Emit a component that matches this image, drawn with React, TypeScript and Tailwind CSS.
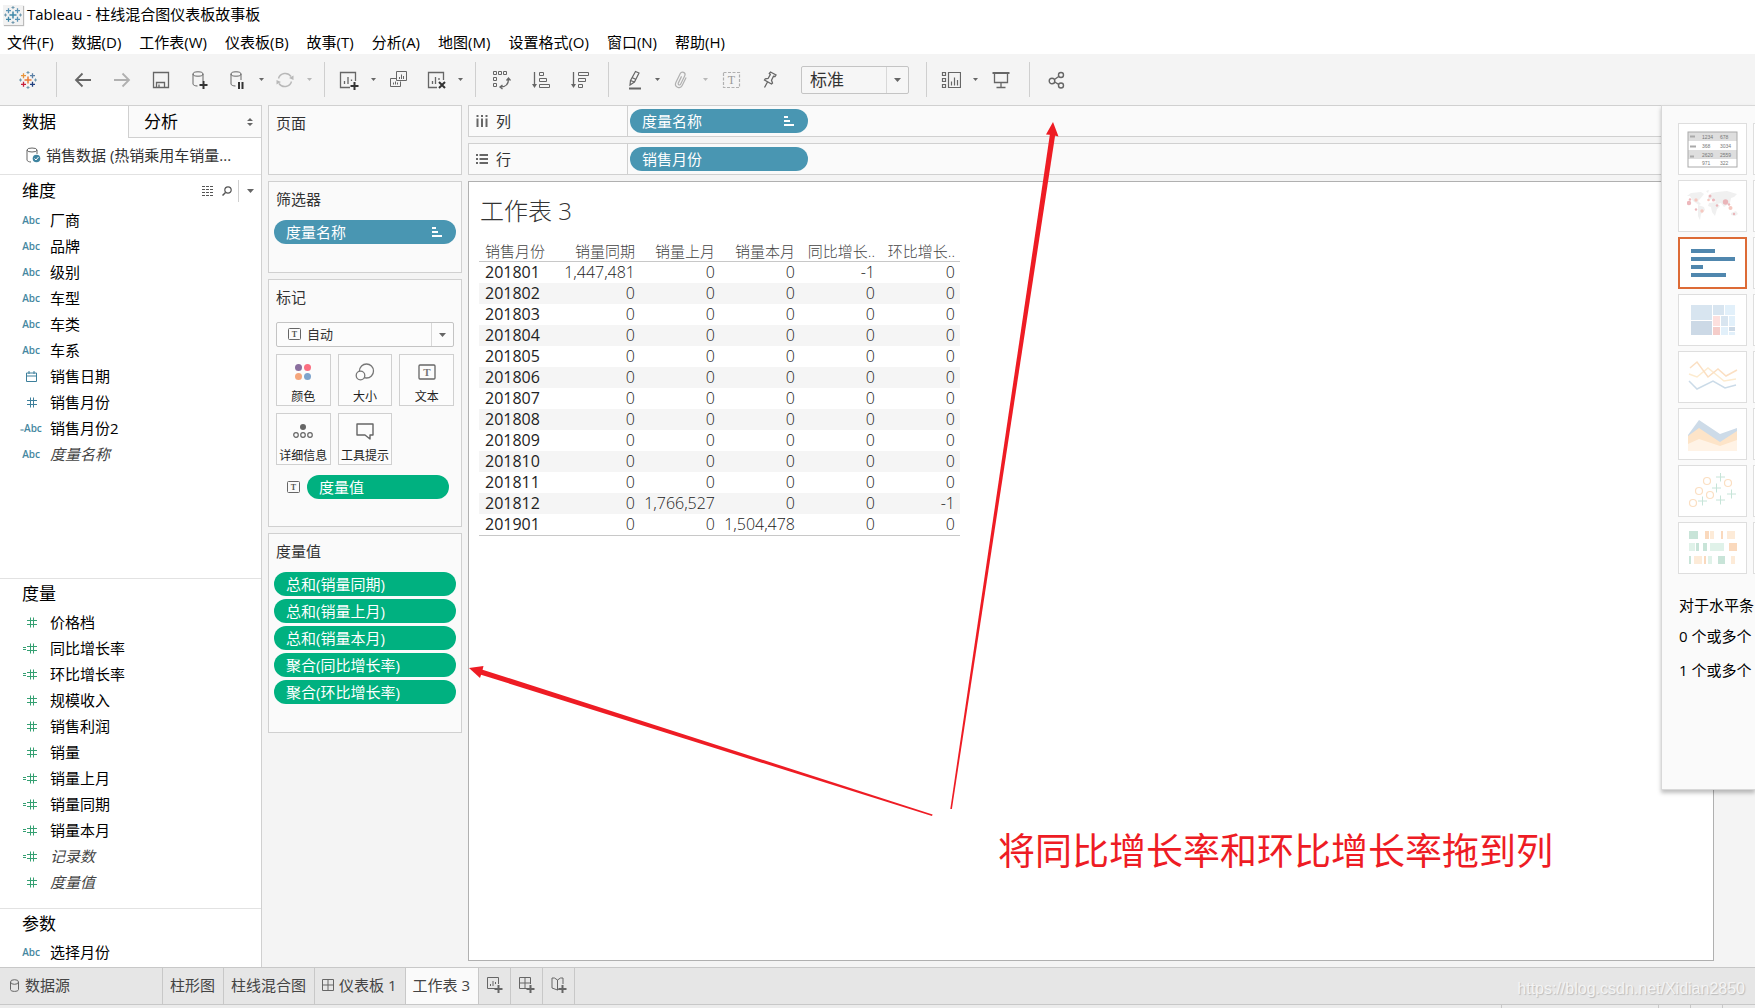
import type { ReactNode } from 'react';

const menus = ['文件(F)', '数据(D)', '工作表(W)', '仪表板(B)', '故事(T)', '分析(A)', '地图(M)', '设置格式(O)', '窗口(N)', '帮助(H)'];

type Field = { name: string; icon: 'abc' | 'num' | 'date'; calc?: boolean; italic?: boolean };

const dimensions: Field[] = [
  { name: '厂商', icon: 'abc' },
  { name: '品牌', icon: 'abc' },
  { name: '级别', icon: 'abc' },
  { name: '车型', icon: 'abc' },
  { name: '车类', icon: 'abc' },
  { name: '车系', icon: 'abc' },
  { name: '销售日期', icon: 'date' },
  { name: '销售月份', icon: 'num' },
  { name: '销售月份2', icon: 'abc', calc: true },
  { name: '度量名称', icon: 'abc', italic: true },
];

const measures: Field[] = [
  { name: '价格档', icon: 'num' },
  { name: '同比增长率', icon: 'num', calc: true },
  { name: '环比增长率', icon: 'num', calc: true },
  { name: '规模收入', icon: 'num' },
  { name: '销售利润', icon: 'num' },
  { name: '销量', icon: 'num' },
  { name: '销量上月', icon: 'num', calc: true },
  { name: '销量同期', icon: 'num', calc: true },
  { name: '销量本月', icon: 'num', calc: true },
  { name: '记录数', icon: 'num', calc: true, italic: true },
  { name: '度量值', icon: 'num', italic: true },
];

const measureValues = ['总和(销量同期)', '总和(销量上月)', '总和(销量本月)', '聚合(同比增长率)', '聚合(环比增长率)'];

const columns = ['销量同期', '销量上月', '销量本月', '同比增长..', '环比增长..'];

const rows = [
  ['201801', '1,447,481', '0', '0', '-1', '0'],
  ['201802', '0', '0', '0', '0', '0'],
  ['201803', '0', '0', '0', '0', '0'],
  ['201804', '0', '0', '0', '0', '0'],
  ['201805', '0', '0', '0', '0', '0'],
  ['201806', '0', '0', '0', '0', '0'],
  ['201807', '0', '0', '0', '0', '0'],
  ['201808', '0', '0', '0', '0', '0'],
  ['201809', '0', '0', '0', '0', '0'],
  ['201810', '0', '0', '0', '0', '0'],
  ['201811', '0', '0', '0', '0', '0'],
  ['201812', '0', '1,766,527', '0', '0', '-1'],
  ['201901', '0', '0', '1,504,478', '0', '0'],
];

/* ---------- icons ---------- */

function Svg({ w = 20, h = 20, color = '#666', children }: { w?: number; h?: number; color?: string; children: ReactNode }) {
  return (
    <svg width={w} height={h} viewBox={`0 0 ${w} ${h}`} fill="none" stroke={color} className="shrink-0" aria-hidden="true">
      {children}
    </svg>
  );
}

function Logo({ mono }: { mono?: boolean }) {
  const c = mono ? ['#3f87a8', '#5a93b5', '#5a93b5', '#3f87a8', '#5a93b5'] : ['#eb7a34', '#e8943a', '#5a7fa5', '#c8203c', '#1f3f7f'];
  return (
    <Svg>
      <path d="M10 6.5v7M6.5 10h7" stroke={c[0]} strokeWidth="1.5" />
      <path d="M5.5 3.2v5M3 5.7h5" stroke={c[1]} strokeWidth="1.3" />
      <path d="M14.5 3.2v5M12 5.7h5" stroke={c[2]} strokeWidth="1.3" />
      <path d="M5.5 11.8v5M3 14.3h5" stroke={c[3]} strokeWidth="1.3" />
      <path d="M14.5 11.8v5M12 14.3h5" stroke={c[4]} strokeWidth="1.3" />
      <path d="M10 1v3M8.5 2.5h3M10 16v3M8.5 17.5h3M2.5 8.5v3M1 10h3M17.5 8.5v3M16 10h3" stroke="#6f98ae" />
    </Svg>
  );
}

function Caret({ color = '#666', big }: { color?: string; big?: boolean }) {
  return (
    <Svg w={7} h={4}>
      <path d={big ? 'M0 0h7L3.5 4z' : 'M1 0h5L3.5 3z'} fill={color} stroke="none" />
    </Svg>
  );
}

function TextBox({ big }: { big?: boolean }) {
  return big ? (
    <Svg w={18} h={16}>
      <rect x="1" y="1" width="16" height="14" rx="1" strokeWidth="1.3" />
      <text x="9" y="12" fontSize="11" fontWeight="bold" fontFamily="Liberation Serif, serif" textAnchor="middle" fill="#777" stroke="none">T</text>
    </Svg>
  ) : (
    <Svg w={13} h={12}>
      <rect x=".5" y=".5" width="12" height="11" rx="1" />
      <text x="6.5" y="9" fontSize="8" fontWeight="bold" fontFamily="Liberation Serif, serif" textAnchor="middle" fill="#555" stroke="none">T</text>
    </Svg>
  );
}

function SortMark() {
  return (
    <Svg w={10} h={10} color="#fff">
      <path d="M0 1h4M0 5h6M0 9h10" strokeWidth="2" />
    </Svg>
  );
}

const icons = {
  back: <Svg><path d="M18 10H3M9.5 3.5L3 10l6.5 6.5" strokeWidth="1.8" /></Svg>,
  forward: <Svg color="#b0b0b0"><path d="M2 10h15M10.5 3.5L17 10l-6.5 6.5" strokeWidth="1.8" /></Svg>,
  save: <Svg><path d="M2.5 2.5h15v15h-15zM5.5 17v-4.500h8V17M8 17v-2.5" strokeWidth="1.3" /></Svg>,
  dbAdd: (
    <Svg>
      <ellipse cx="8" cy="4" rx="5" ry="2.2" />
      <path d="M3 4v10c0 1 2 2 4.5 2M13 4v7" />
      <path d="M13.5 11v8M9.5 15h8" stroke="#333" strokeWidth="2" />
    </Svg>
  ),
  dbPause: (
    <Svg>
      <ellipse cx="9" cy="4" rx="5" ry="2.2" />
      <path d="M4 4v10c0 1 2 2 4.5 2M14 4v6" />
      <path d="M12 12v7M15.5 12v7" stroke="#333" strokeWidth="2" />
    </Svg>
  ),
  refresh: (
    <Svg color="#b8b8b8">
      <path d="M3.5 8.500A7 7 0 0 1 16 6.5M16.5 11.5A7 7 0 0 1 4 13.5" strokeWidth="1.4" />
      <path d="M18.5 5.5v4.500l-4.500-2zM1.500 14.500V10l4.500 2z" fill="#b8b8b8" stroke="none" />
    </Svg>
  ),
  sheetAdd: (
    <Svg>
      <path d="M11 17.5H1.5v-15h15V11M5.500 14v-3M9 14V7M12.500 11v-1.500" strokeWidth="1.3" />
      <path d="M15.5 12v8M11.500 16h8" stroke="#333" strokeWidth="2" />
    </Svg>
  ),
  duplicate: (
    <Svg>
      <path d="M7.5 1.5h10v9h-10zM10.500 9V7M12.500 9V4.500M14.500 9V6M7 8.500H1.500v8h10v-5M4.500 14.500v-2M6.500 14.500v-3M8.500 14.500v-2" />
    </Svg>
  ),
  clear: (
    <Svg>
      <path d="M11 17.5H2.5v-15h15V10M6.500 14v-3M9.500 14V7M13 10V8" strokeWidth="1.3" />
      <path d="M13 12l6 6M19 12l-6 6" stroke="#333" strokeWidth="2" />
    </Svg>
  ),
  swap: (
    <Svg>
      <path d="M1.5 1.5h3v3h-3zM6.500 1.500h3v3h-3zM11.500 1.500h3v3h-3zM1.500 7.500h3v3h-3zM1.500 13.500h3v3h-3z" />
      <path d="M16.5 9c0 5-3 8-8 8M14.500 10.500l2-2.500 2 2.500M10.500 15L8 17l2.500 2" strokeWidth="1.3" />
    </Svg>
  ),
  sortAsc: (
    <Svg>
      <path d="M3.5 2v14" strokeWidth="1.3" />
      <path d="M1 14h5l-2.500 4z" fill="#666" stroke="none" />
      <path d="M8.5 2.500h4v3h-4zM8.500 8.500h7v3h-7zM8.500 14.500h10v3h-10z" />
    </Svg>
  ),
  sortDesc: (
    <Svg>
      <path d="M3.5 2v14" strokeWidth="1.3" />
      <path d="M1 14h5l-2.500 4z" fill="#666" stroke="none" />
      <path d="M8.5 2.500h10v3h-10zM8.500 8.500h7v3h-7zM8.500 14.500h4v3h-4z" />
    </Svg>
  ),
  highlight: (
    <Svg>
      <path d="M7.5 10.500L12.500 1.500l3.500 1.500-4.500 9zM7.500 10.500l-.5 4.500 4.500-3M9 7.500l4 2" strokeWidth="1.2" />
      <path d="M6 18.500h12" strokeWidth="2" />
    </Svg>
  ),
  clip: (
    <Svg color="#b0b0b0">
      <g transform="rotate(26 10 10)">
        <path d="M13.500 5.500v9a3.500 3.500 0 0 1-7 0v-10a2.500 2.500 0 0 1 5 0v9.500a1.300 1.300 0 0 1-2.600 0V6.500" strokeWidth="1.2" />
      </g>
    </Svg>
  ),
  label: (
    <Svg color="#b0b0b0">
      <rect x="2.500" y="2.500" width="16" height="15" strokeDasharray="3 1.500" strokeWidth="1.2" />
      <text x="10.500" y="14" fontSize="12" fontFamily="Liberation Serif, serif" textAnchor="middle" fill="#999" stroke="none">T</text>
    </Svg>
  ),
  pin: (
    <Svg>
      <path d="M10.500 2l5.500 3-1 1.500-1.500-.2-2 4 1 2.700-1 1-7-4 .8-1.200 2.800-.3 2.200-4-1-1zM7.500 12L4.500 17.500" strokeWidth="1.3" />
    </Svg>
  ),
  cards: (
    <Svg>
      <path d="M1.500 2.500h3v3h-3zM1.500 8.500h3v3h-3zM1.500 14.500h3v3h-3zM7.500 2.500h12v15h-12zM10.500 15.500v-4M13.500 15.500v-8M16.500 15.500V10" strokeWidth="1.2" />
    </Svg>
  ),
  present: (
    <Svg>
      <path d="M1.500 3h17" strokeWidth="2" />
      <path d="M3.500 4v8.500h13V4M10 12.500v5M5.500 17.500h9" strokeWidth="1.3" />
    </Svg>
  ),
  share: (
    <Svg>
      <circle cx="6" cy="11" r="2.800" strokeWidth="1.4" />
      <circle cx="15" cy="5" r="2.500" strokeWidth="1.4" />
      <circle cx="15" cy="15.500" r="2.500" strokeWidth="1.4" />
      <path d="M8.400 9.500l4.300-3M8.700 12l4 2.300" strokeWidth="1.4" />
    </Svg>
  ),
};

/* ---------- small parts ---------- */

function Tool({ icon, title, wide }: { icon: ReactNode; title: string; wide?: boolean }) {
  return (
    <button aria-label={title} className={`flex h-9 shrink-0 items-center justify-center ${wide ? 'w-[39px]' : 'w-9'}`}>
      {icon}
    </button>
  );
}

function Drop({ title, dim }: { title: string; dim?: boolean }) {
  return (
    <button aria-label={title} className="flex h-9 w-3 shrink-0 items-center justify-center">
      <Caret color={dim ? '#b8b8b8' : '#666'} />
    </button>
  );
}

function Divider() {
  return <div className="h-[35px] w-px shrink-0 bg-[#cfcfcf]" />;
}

function Pill({ children, green, sort }: { children: ReactNode; green?: boolean; sort?: boolean }) {
  return (
    <button className={`flex h-6 w-full items-center justify-between rounded-full pr-[14px] pl-3 text-left leading-6 text-white ${green ? 'bg-[#00b180]' : 'bg-[#4996b2]'}`}>
      {children}
      {sort && <SortMark />}
    </button>
  );
}

function Card({ title, className, children }: { title: string; className: string; children?: ReactNode }) {
  return (
    <section className={`border border-[#d0d0d0] bg-[#fafafa] px-[5px] ${className}`}>
      <h2 className="mb-1 pl-[2px] leading-[34px] text-[#333]">{title}</h2>
      {children}
    </section>
  );
}

function FieldIcon({ field }: { field: Field }) {
  if (field.icon === 'abc') {
    return (
      <span className="w-5 shrink-0 text-right text-[10px] font-semibold whitespace-nowrap text-[#4587a0]">
        {field.calc && <span className="text-[7px]">=</span>}Abc
      </span>
    );
  }
  if (field.icon === 'date') {
    return (
      <span className="flex w-5 justify-end pr-[3px]">
        <Svg w={11} h={11} color="#3d7f9b">
          <path d="M.5 2h10v8.500H.5zM.5 5h10M3 0v3M8 0v3" />
        </Svg>
      </span>
    );
  }
  const color = field.name === '销售月份' ? '#3d7f9b' : '#35a072';
  return (
    <span className="flex w-5 justify-end pr-[3px]">
      <Svg w={14} h={11} color={color}>
        <path d="M7.500 .5v10M10.500 .5v10M4 3.500h10M4 7.500h10" />
        {field.calc && <path d="M0 4.500h3M0 6.500h3" />}
      </Svg>
    </span>
  );
}

function FieldList({ fields }: { fields: Field[] }) {
  return (
    <ul>
      {fields.map((f) => (
        <li key={f.name} className="flex h-[26px] items-center gap-[10px] pl-5 text-black">
          <FieldIcon field={f} />
          <span className={f.italic ? 'text-[#444] italic' : ''}>{f.name}</span>
        </li>
      ))}
    </ul>
  );
}

function Shelf({ icon, name, children }: { icon: ReactNode; name: string; children: ReactNode }) {
  return (
    <div className="flex h-8 border border-r-0 border-[#d0d0d0] bg-[#fafafa]">
      <div className="flex w-[159px] shrink-0 items-center gap-2 border-r border-[#d0d0d0] pl-[7px] text-[#333]">
        {icon}
        {name}
      </div>
      <div className="flex w-[180px] items-center pl-[2px]">{children}</div>
    </div>
  );
}

function MarkButton({ icon, name }: { icon: ReactNode; name: string }) {
  return (
    <button className="flex h-[52px] flex-col items-center border border-[#d0d0d0] bg-[#fcfcfc] pt-[7px] text-[12px] whitespace-nowrap text-[#222]">
      <span className="flex h-5 items-center">{icon}</span>
      <span className="pt-[7px] leading-4">{name}</span>
    </button>
  );
}

function Thumb({ title, active, children }: { title: string; active?: boolean; children?: ReactNode }) {
  return (
    <button aria-label={title} className={`flex h-[52px] items-center justify-center bg-white ${active ? 'border-2 border-[#dd6b36]' : 'border border-[#dedede]'}`}>
      <svg width="51" height="37" viewBox="0 0 51 37" fill="none" className="shrink-0" aria-hidden="true">
        {children}
      </svg>
    </button>
  );
}

function ShowMe() {
  return (
    <aside className="absolute top-0 right-0 h-[685px] w-[94px] overflow-hidden border border-r-0 border-[#d8d8d8] bg-[#fafafa] pl-4 shadow-[0_3px_4px_rgba(0,0,0,0.25)]">
      <div className="grid w-[144px] grid-cols-[69px_69px] gap-x-[6px] gap-y-[5px] pt-[17px]">
        <Thumb title="文本表">
          <path d="M1 1h49v9H1zM1 19h49v9H1z" fill="#dedede" />
          <rect x="1" y="1" width="49" height="35" stroke="#aaa" />
          <path d="M3 5.500h5M3 15.500h6M3 25.500h4" stroke="#aaa" strokeWidth="2" />
          <g fontSize="5" fill="#777" fontFamily="Liberation Sans, sans-serif">
            <text x="15" y="7.500">1234</text><text x="33" y="7.500">678</text>
            <text x="15" y="16.500">368</text><text x="33" y="16.500">3034</text>
            <text x="15" y="25.500">2620</text><text x="33" y="25.500">2559</text>
            <text x="15" y="34">971</text><text x="33" y="34">322</text>
          </g>
        </Thumb>
        <Thumb title="热图" />
        <Thumb title="符号地图">
          <path d="M0 8l4-3 10-1 3 2-4 5-2 2 3 3-2 1-6-4-3-5zM11 17l6 2 1 3-4 4-1 6-2-4zM19 3l3-1-1 3zM21 10l3-5 6-1 10-1 10 3-3 3-3 1-1 5-3 2-3 2-3-4-4 1-3-5-6 1zM22 15l7-1 4 4-3 3-2 7-3-4-1-5-3-1zM44 25l5-2 2 3-3 2-4-1z" fill="#f0f0f0" />
          <g fill="#e8a6ab" fillOpacity=".8">
            <circle cx="2" cy="15" r="2.200" /><circle cx="3" cy="11.500" r="1.200" /><circle cx="23" cy="8" r="1.500" />
            <circle cx="26.500" cy="12" r="1.600" /><circle cx="38.500" cy="14" r="2.700" /><circle cx="42" cy="16.500" r="1.200" />
            <circle cx="9" cy="21.500" r="1.200" /><circle cx="30" cy="17.500" r="1.200" /><circle cx="47" cy="26" r="1.200" />
          </g>
          <g fill="#f6c8c0">
            <circle cx="9" cy="12" r="1.700" /><circle cx="15" cy="23" r="1.700" />
            <circle cx="43.500" cy="20" r="2" /><circle cx="21.500" cy="12" r="1.300" />
          </g>
        </Thumb>
        <Thumb title="地图" />
        <Thumb title="水平条" active>
          <path d="M4 4h24v4H4zM4 12h44v4H4zM4 20h12v4H4zM4 28h35v4H4z" fill="#5087ae" />
        </Thumb>
        <Thumb title="堆叠条" />
        <Thumb title="树状图">
          <path d="M4 3h21v15H4zM26 3h11v10H26zM34 14h7v10h-7z" fill="#d8e5f0" />
          <path d="M4 19h21v14H4zM42 25h6v4h-6z" fill="#ccd9e6" />
          <path d="M38 3h10v10H38zM42 14h6v10h-6zM34 25h7v8h-7zM42 30h6v3h-6z" fill="#e2f0fa" />
          <path d="M26 14h7v10h-7z" fill="#fde0de" />
          <path d="M26 25h7v8h-7z" fill="#f5cdca" />
        </Thumb>
        <Thumb title="圆视图" />
        <Thumb title="折线图">
          <path d="M2 15l8 3 11-9 16 13 12-2" stroke="#fdebcf" strokeWidth="1.500" />
          <path d="M3 9l7-6 11 15 10-8 8 7 11-6" stroke="#fbdfc2" strokeWidth="1.500" />
          <path d="M2 22l8 8 16-8 12 7 11-3" stroke="#cbdbe8" strokeWidth="1.500" />
        </Thumb>
        <Thumb title="双线图" />
        <Thumb title="面积图">
          <path d="M1 19L12 4l21 14 17-6v23H1z" fill="#cddbe8" />
          <path d="M1 20l11-8 21 14 17-11v20H1z" fill="#fde4c8" />
          <path d="M1 28l11-5 21 7 17-6v11H1z" fill="#fff3e6" />
        </Thumb>
        <Thumb title="双组合" />
        <Thumb title="散点图">
          <g stroke="#fbdfc2" strokeWidth="1.200">
            <circle cx="6" cy="30" r="3.500" /><circle cx="12" cy="18" r="3.500" /><circle cx="20" cy="8" r="3.500" />
            <circle cx="23" cy="22" r="3.500" /><circle cx="41" cy="10" r="3.500" />
          </g>
          <path d="M29 4h9M33.500 -.5v9M25 15h9M29.500 10.500v9M40 21h9M44.500 16.500v9M29 27h9M33.500 22.500v9M11 28h9M15.500 23.500v9" stroke="#c6e4d8" />
        </Thumb>
        <Thumb title="直方图" />
        <Thumb title="甘特图">
          <path d="M2 1h9v8H2zM9 13h3v8H9zM16 13h4v8h-4zM2 26h2v8H2zM31 26h7v8h-7z" fill="#c8e4d8" />
          <path d="M2 13h6v8H2zM23 13h14v8H23zM21 26h4v8h-4z" fill="#e0f2e9" />
          <path d="M18 1h4v8h-4zM34 1h2v8h-2zM42 13h8v8h-8zM17 26h2v8h-2z" fill="#fad9bd" />
          <path d="M23 1h4v8h-4zM40 1h8v8h-8zM7 26h8v8H7zM44 26h4v8h-4z" fill="#fdebd8" />
        </Thumb>
        <Thumb title="标靶图" />
      </div>
      <div className="pt-[18px] pl-px whitespace-nowrap text-black">
        <p className="leading-[26px]">对于水平条</p>
        <p className="leading-9">0 个或多个</p>
        <p className="leading-8">1 个或多个</p>
      </div>
    </aside>
  );
}

function Sidebar() {
  return (
    <aside className="flex w-[262px] shrink-0 flex-col border-t border-r border-[#d0d0d0] bg-white">
      <div className="flex h-8">
        <button className="w-32 pl-[22px] text-left text-[17px] text-black">数据</button>
        <button className="flex flex-1 items-center justify-between border-b border-l border-[#d0d0d0] bg-[#fafafa] pr-2 pl-[15px] text-[17px] text-black">
          分析
          <Svg w={6} h={8}>
            <path d="M0 3h6L3 0zM0 5h6L3 8z" fill="#666" stroke="none" />
          </Svg>
        </button>
      </div>
      <div className="flex h-9 items-center gap-[5px] pb-[2px] pl-[26px] text-[#333]">
        <Svg w={15} h={16}>
          <ellipse cx="6" cy="3" rx="5" ry="2" />
          <path d="M1 3v10c0 1 2 2 4 2M11 3v4" />
          <circle cx="10.500" cy="11.500" r="3.800" fill="#3f84a0" stroke="none" />
          <path d="M8.500 11.500l1.500 1.500 2.500-3" stroke="#fff" />
        </Svg>
        销售数据 (热销乘用车销量...
      </div>

      <section className="flex-1 border-t border-[#e2e2e2]">
        <div className="flex h-8 items-center pr-[7px] pl-[22px]">
          <h2 className="flex-1 text-[17px] text-black">维度</h2>
          <button aria-label="查看数据" className="mr-2">
            <Svg w={12} h={10} color="#555">
              <path d="M0 .5h12M0 3.500h12M0 6.500h12M0 9.500h12" strokeDasharray="3 1" />
            </Svg>
          </button>
          <button aria-label="查找" className="mr-[6px]">
            <Svg w={10} h={10} color="#555">
              <circle cx="6" cy="4" r="3.200" strokeWidth="1.200" />
              <path d="M3.500 6.500L.5 9.500" strokeWidth="1.500" />
            </Svg>
          </button>
          <div className="mr-2 h-[22px] w-px bg-[#d0d0d0]" />
          <button aria-label="更多">
            <Caret big />
          </button>
        </div>
        <FieldList fields={dimensions} />
      </section>

      <section className="border-t border-[#e2e2e2] pb-[13px]">
        <h2 className="pl-[22px] text-[17px] leading-[30px] text-black">度量</h2>
        <FieldList fields={measures} />
      </section>

      <section className="border-t border-[#e2e2e2] pb-[2px]">
        <h2 className="pl-[22px] text-[17px] leading-[30px] text-black">参数</h2>
        <FieldList fields={[{ name: '选择月份', icon: 'abc' }]} />
      </section>
    </aside>
  );
}

function Cards() {
  return (
    <div className="flex w-[194px] shrink-0 flex-col gap-[6px]">
      <Card title="页面" className="h-[70px]" />
      <Card title="筛选器" className="h-[92px]">
        <Pill sort>度量名称</Pill>
      </Card>
      <Card title="标记" className="h-[248px]">
        <div className="px-[2px] pt-1">
          <div className="relative">
            <select aria-label="标记类型" className="block h-[25px] w-full appearance-none rounded-xs border border-[#c4c4c4] bg-[#fcfcfc] pl-[30px] text-[13px] text-[#333]">
              <option>自动</option>
            </select>
            <span className="pointer-events-none absolute top-[6px] left-3">
              <TextBox />
            </span>
            <span className="pointer-events-none absolute inset-y-px right-px flex w-[22px] items-center justify-center border-l border-[#d8d8d8]">
              <Caret big />
            </span>
          </div>
          <div className="grid grid-cols-3 gap-[7px] pt-[7px]">
            <MarkButton
              name="颜色"
              icon={
                <Svg w={18} h={18}>
                  <g stroke="none">
                    <circle cx="4.500" cy="4.500" r="3.500" fill="#8a6f9e" />
                    <circle cx="13.500" cy="4.500" r="3.500" fill="#fb6f81" />
                    <circle cx="4.500" cy="13.500" r="3.500" fill="#f5a67c" />
                    <circle cx="13.500" cy="13.500" r="3.500" fill="#7fa4cc" />
                  </g>
                </Svg>
              }
            />
            <MarkButton
              name="大小"
              icon={
                <Svg w={20} h={18} color="#777">
                  <circle cx="11.500" cy="8" r="7" strokeWidth="1.300" />
                  <circle cx="5.500" cy="12.500" r="4.300" strokeWidth="1.300" fill="#fcfcfc" />
                </Svg>
              }
            />
            <MarkButton name="文本" icon={<TextBox big />} />
            <MarkButton
              name="详细信息"
              icon={
                <Svg w={20} h={16}>
                  <circle cx="10" cy="4" r="3" fill="#666" stroke="none" />
                  <circle cx="3" cy="12" r="2.300" strokeWidth="1.200" />
                  <circle cx="10" cy="12" r="2.300" strokeWidth="1.200" />
                  <circle cx="17" cy="12" r="2.300" strokeWidth="1.200" />
                </Svg>
              }
            />
            <MarkButton
              name="工具提示"
              icon={
                <Svg w={20} h={18}>
                  <path d="M2 2h16v11h-3v4l-5-4H2z" strokeWidth="1.400" strokeLinejoin="round" />
                </Svg>
              }
            />
          </div>
          <div className="flex items-center gap-[7px] pt-[10px] pr-[5px] pl-[11px]">
            <TextBox />
            <Pill green>度量值</Pill>
          </div>
        </div>
      </Card>
      <Card title="度量值" className="h-[200px]">
        <div className="flex flex-col gap-[3px]">
          {measureValues.map((m) => (
            <Pill key={m} green>{m}</Pill>
          ))}
        </div>
      </Card>
    </div>
  );
}

function Worksheet() {
  return (
    <div className="mr-[41px] mb-[6px] flex-1 border border-[#b0b0b0] bg-white pt-[8px] pl-[10px]">
      <h1 className="pl-px text-[24px] leading-[42px] font-light text-[#333]">工作表 3</h1>
      <table className="w-[481px] table-fixed border-collapse border-b border-[#c8c8c8] text-[#222]">
        <thead>
          <tr className="h-[29px] border-b border-[#c8c8c8] align-bottom leading-5 text-[#444]">
            <th className="w-[81px] pl-[6px] text-left font-light">销售月份</th>
            {columns.map((c) => (
              <th key={c} className="w-20 pr-[5px] text-right font-light whitespace-nowrap">{c}</th>
            ))}
          </tr>
        </thead>
        <tbody>
          {rows.map(([month, ...cells]) => (
            <tr key={month} className="h-[21px] text-[16px] leading-[21px] even:bg-[#f5f5f5]">
              <th className="pl-[6px] text-left font-normal">{month}</th>
              {cells.map((v, i) => (
                <td key={i} className="pr-[5px] text-right font-light">{v}</td>
              ))}
            </tr>
          ))}
        </tbody>
      </table>
    </div>
  );
}

function SheetTabs() {
  const cell = 'flex items-center border-r border-[#c8c8c8] pb-[2px]';
  return (
    <footer className="border-t border-[#c8c8c8] bg-[#ececec] text-[#444]">
      <div className="flex h-9 bg-[#e6e6e6]">
        <button className={`${cell} w-[163px] gap-[6px] pl-[10px]`}>
          <Svg w={9} h={13}>
            <ellipse cx="4.500" cy="3" rx="4" ry="2.300" />
            <path d="M.5 3v7.500c0 2.500 8 2.500 8 0V3" />
          </Svg>
          数据源
        </button>
        <button className={`${cell} pr-2 pl-[7px]`}>柱形图</button>
        <button className={`${cell} pr-2 pl-[7px]`}>柱线混合图</button>
        <button className={`${cell} gap-[5px] pr-2 pl-[7px]`}>
          <Svg w={12} h={12}>
            <path d="M.5 .5h11v11H.5zM6 .5v11M.5 6h11" />
          </Svg>
          仪表板 1
        </button>
        <button className={`${cell} bg-[#fafafa] pr-2 pl-[7px]`}>工作表 3</button>
        <button aria-label="新建工作表" className={`${cell} w-8 justify-center`}>
          <Svg w={16} h={16}>
            <path d="M8 11.500H.5V.5h11V7M3.500 9V7M6 9V4M8.500 7V5" />
            <path d="M11.500 8v8M7.500 12h8" strokeWidth="2" />
          </Svg>
        </button>
        <button aria-label="新建仪表板" className={`${cell} w-8 justify-center`}>
          <Svg w={16} h={16}>
            <path d="M8 11.500H.5V.5h11V7M6 .5v11M.5 6h11" />
            <path d="M11.500 8v8M7.500 12h8" strokeWidth="2" />
          </Svg>
        </button>
        <button aria-label="新建故事" className={`${cell} w-8 justify-center`}>
          <Svg w={16} h={16}>
            <path d="M8 12L6.500 13 1 11V1h2.500L6.500 3 9.500 1H12v6M6.500 3v10" />
            <path d="M11.500 8v8M7.500 12h8" strokeWidth="2" />
          </Svg>
        </button>
        <span className="ml-auto self-center pt-[6px] pr-[10px] font-['Liberation_Sans',sans-serif] text-[16px] whitespace-nowrap text-[#f4f4f4] [text-shadow:1px_1px_1px_#bbb]">
          https://blog.csdn.net/Xidian2850
        </span>
      </div>
      <div className="flex h-1 justify-end border-t border-[#c8c8c8]">
        <div className="w-[157px] border-l border-[#c8c8c8]" />
        <div className="w-8 border-l border-[#c8c8c8]" />
        <div className="w-8 border-l border-[#c8c8c8]" />
        <div className="w-[33px] border-l border-[#c8c8c8]" />
      </div>
    </footer>
  );
}

// Red callout drawn over the workbook
function Annotation() {
  return (
    <div className="pointer-events-none absolute top-0 left-[468px] text-[#ee1c24]">
      <svg width="600" height="720" viewBox="468 105 600 720" fill="currentColor" aria-hidden="true">
        <path d="M932 816l.6-1.600L481.800 669.400l-1.600 5.100z" />
        <path d="M469 668l14.500-2-1.500 6-2 6z" />
        <path d="M950.300 809h1.600L1055.500 133l-5.300-.8z" />
        <path d="M1053 122l5.500 14.500-6-1.500-6.500-.5z" />
      </svg>
      <p className="absolute top-[717px] left-[530px] text-[37px] leading-[58px] whitespace-nowrap">将同比增长率和环比增长率拖到列</p>
    </div>
  );
}

export default function App() {
  return (
    <div className="flex h-screen w-full flex-col overflow-hidden bg-[#f4f4f4] font-['Open_Sans','Noto_Sans_CJK_SC',sans-serif] text-[15px] text-[#333]">
      <header className="bg-white text-black">
        <div className="flex h-[29px] items-center gap-1 pl-[3px]">
          <span className="flex h-5 w-5 items-center justify-center bg-[#f2f2f2] shadow-[1px_1px_1px_#bbb]">
            <Logo mono />
          </span>
          Tableau - 柱线混合图仪表板故事板
        </div>
        <nav className="flex h-[25px] items-center gap-[18px] pt-[2px] pl-[7px]">
          {menus.map((m) => (
            <button key={m} className="whitespace-nowrap">{m}</button>
          ))}
        </nav>
      </header>

      <div className="flex h-[51px] shrink-0 items-center">
        <div className="flex w-14 justify-center">
          <Tool icon={<Logo />} title="开始页面" />
        </div>
        <Divider />
        <div className="flex pr-[9px] pl-[6px]">
          <Tool wide icon={icons.back} title="撤消" />
          <Tool wide icon={icons.forward} title="重做" />
          <Tool wide icon={icons.save} title="保存" />
          <Tool wide icon={icons.dbAdd} title="新建数据源" />
          <Tool icon={icons.dbPause} title="暂停自动更新" />
          <Drop title="自动更新选项" />
          <Tool icon={icons.refresh} title="运行更新" />
          <Drop title="更新选项" dim />
        </div>
        <Divider />
        <div className="flex pr-[9px] pl-[6px]">
          <Tool icon={icons.sheetAdd} title="新建工作表" />
          <Drop title="新建选项" />
          <Tool wide icon={icons.duplicate} title="复制" />
          <Tool icon={icons.clear} title="清除工作表" />
          <Drop title="清除选项" />
        </div>
        <Divider />
        <div className="flex pr-[9px] pl-[6px]">
          <Tool wide icon={icons.swap} title="交换行和列" />
          <Tool wide icon={icons.sortAsc} title="升序排序" />
          <Tool wide icon={icons.sortDesc} title="降序排序" />
        </div>
        <Divider />
        <div className="flex items-center pr-[17px] pl-[6px]">
          <Tool icon={icons.highlight} title="突出显示" />
          <Drop title="突出显示选项" />
          <Tool icon={icons.clip} title="组成员" />
          <Drop title="组选项" dim />
          <Tool wide icon={icons.label} title="显示标记标签" />
          <Tool wide icon={icons.pin} title="固定轴" />
          <div className="relative ml-3">
            <select aria-label="适合" className="block h-7 w-[108px] appearance-none rounded-xs border border-[#c4c4c4] bg-[#f6f6f6] pl-2 text-[17px] text-[#333]">
              <option>标准</option>
            </select>
            <span className="pointer-events-none absolute inset-y-px right-px flex w-[22px] items-center justify-center border-l border-[#d8d8d8]">
              <Caret big />
            </span>
          </div>
        </div>
        <Divider />
        <div className="flex pr-[9px] pl-[6px]">
          <Tool icon={icons.cards} title="显示/隐藏卡" />
          <Drop title="卡选项" />
          <Tool wide icon={icons.present} title="演示模式" />
        </div>
        <Divider />
        <div className="flex pl-[6px]">
          <Tool wide icon={icons.share} title="共享" />
        </div>
      </div>

      <main className="relative flex min-h-0 flex-1 gap-[6px]">
        <Sidebar />
        <Cards />
        <div className="flex min-w-0 flex-1 flex-col gap-[6px]">
          <Shelf
            name="列"
            icon={
              <Svg w={12} h={12}>
                <path d="M1.500 0v2M1.500 3.500V12M6 0v2M6 3.500V12M10.500 0v2M10.500 3.500V12" strokeWidth="2" />
              </Svg>
            }
          >
            <Pill sort>度量名称</Pill>
          </Shelf>
          <Shelf
            name="行"
            icon={
              <Svg w={12} h={12}>
                <path d="M0 2h2M3.500 2H12M0 6h2M3.500 6H12M0 10h2M3.500 10H12" strokeWidth="2" />
              </Svg>
            }
          >
            <Pill>销售月份</Pill>
          </Shelf>
          <Worksheet />
        </div>
        <ShowMe />
        <Annotation />
      </main>

      <SheetTabs />
    </div>
  );
}
